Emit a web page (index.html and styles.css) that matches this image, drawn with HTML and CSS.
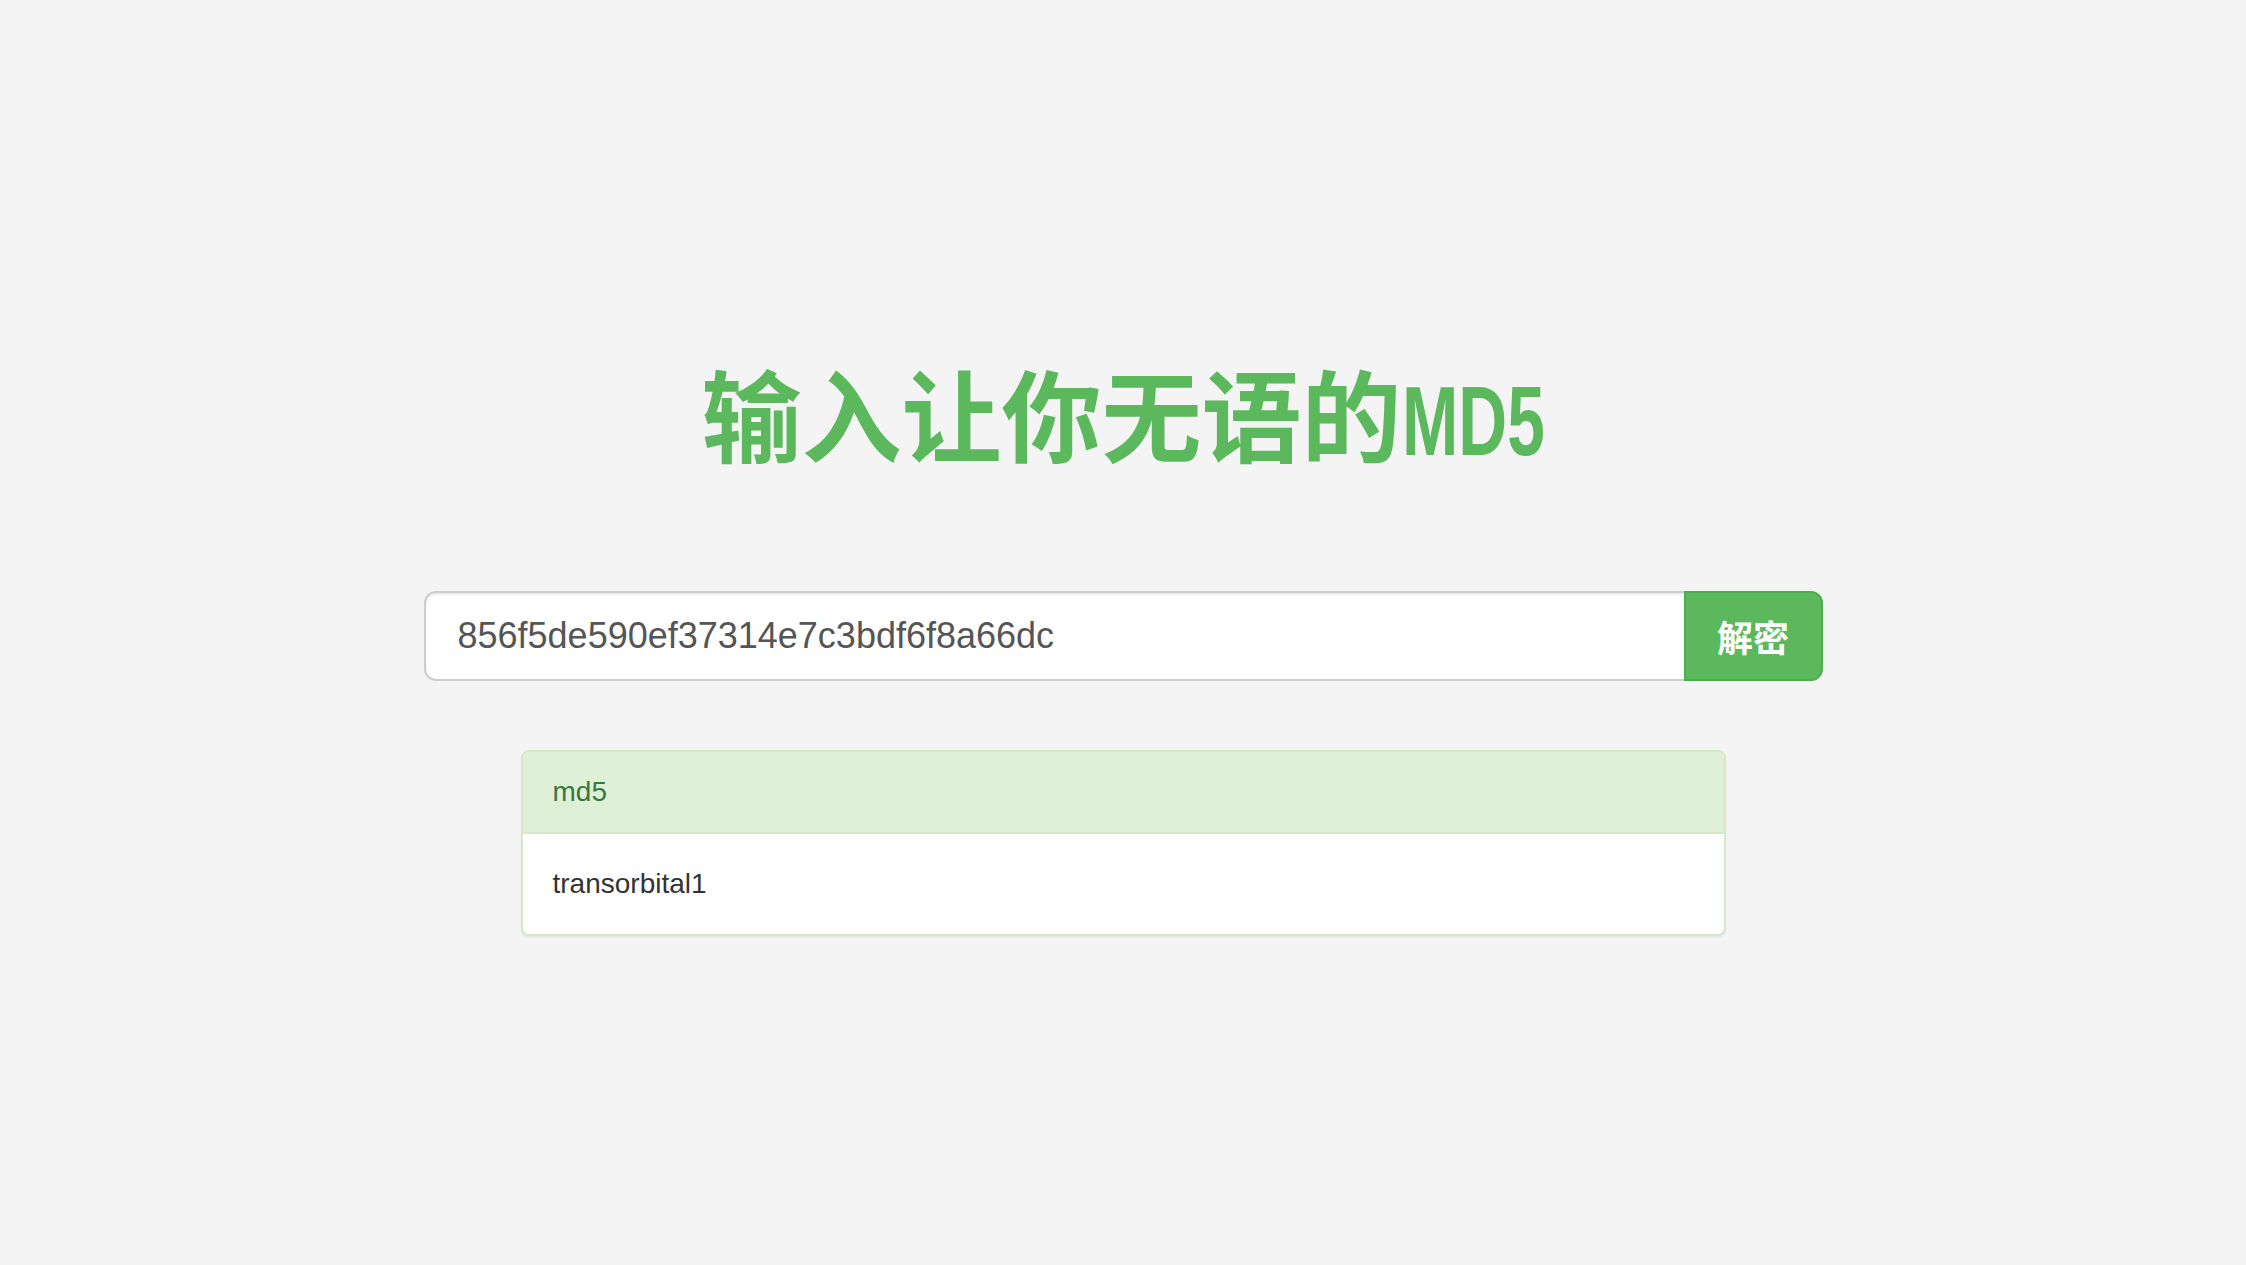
FILE: index.html
```html
<!DOCTYPE html>
<html lang="zh-CN">
<head>
<meta charset="utf-8">
<title>输入让你无语的MD5</title>
<link rel="stylesheet" href="styles.css">
</head>
<body>
<main class="page">
  <h1 class="title">输入让你无语的<span class="title-latin">MD5</span></h1>
  <form class="search">
    <input class="search-input" type="text" value="856f5de590ef37314e7c3bdf6f8a66dc">
    <button class="search-btn" type="button">解密</button>
  </form>
  <section class="panel">
    <div class="panel-heading">md5</div>
    <div class="panel-body">transorbital1</div>
  </section>
</main>
</body>
</html>
```
FILE: styles.css
```css
html, body {
  margin: 0;
  padding: 0;
  background: #f4f4f4;
}

body {
  font-family: "Liberation Sans", Arial, "Noto Sans CJK SC", sans-serif;
  color: #333;
  min-height: 1265px;
}

.page {
  display: flex;
  flex-direction: column;
  align-items: center;
  padding-top: 362px;
}

.title {
  margin: 0;
  font-family: "Noto Sans CJK SC", sans-serif;
  font-weight: 700;
  font-size: 100px;
  line-height: 100px;
  color: #5cb85c;
  white-space: nowrap;
}

.title-latin {
  display: inline-block;
  font-family: "Liberation Sans", Arial, sans-serif;
  font-weight: 700;
  font-size: 98px;
  transform: scaleX(0.69);
  transform-origin: left bottom;
  margin-right: -64px;
}

.search {
  display: flex;
  width: 1399px;
  height: 90px;
  margin: 120px 0 0;
}

.search-input {
  flex: 1;
  box-sizing: border-box;
  height: 90px;
  margin: 0;
  padding: 0 32px;
  border: 2px solid #ccc;
  border-right: none;
  border-radius: 12px 0 0 12px;
  background: #fff;
  box-shadow: inset 0 2px 2px rgba(0, 0, 0, 0.075);
  font-family: "Liberation Sans", Arial, sans-serif;
  font-size: 36px;
  color: #555;
  outline: none;
}

.search-btn {
  box-sizing: border-box;
  width: 139px;
  height: 90px;
  margin: 0;
  padding: 0;
  border: 2px solid #4cae4c;
  border-radius: 0 12px 12px 0;
  background: #5cb85c;
  color: #fff;
  font-family: "Noto Sans CJK SC", sans-serif;
  font-weight: 700;
  font-size: 36px;
  line-height: 1;
}

.panel {
  box-sizing: border-box;
  width: 1205px;
  margin-top: 69px;
  border: 2px solid #d6e9c6;
  border-radius: 8px;
  background: #fff;
  box-shadow: 0 2px 2px rgba(0, 0, 0, 0.05);
  overflow: hidden;
}

.panel-heading {
  padding: 20px 30px;
  background: #dff0d8;
  border-bottom: 2px solid #d6e9c6;
  color: #3c763d;
  font-size: 28px;
  line-height: 40px;
}

.panel-body {
  padding: 30px 30px;
  font-size: 28px;
  line-height: 40px;
  color: #333;
}
```
